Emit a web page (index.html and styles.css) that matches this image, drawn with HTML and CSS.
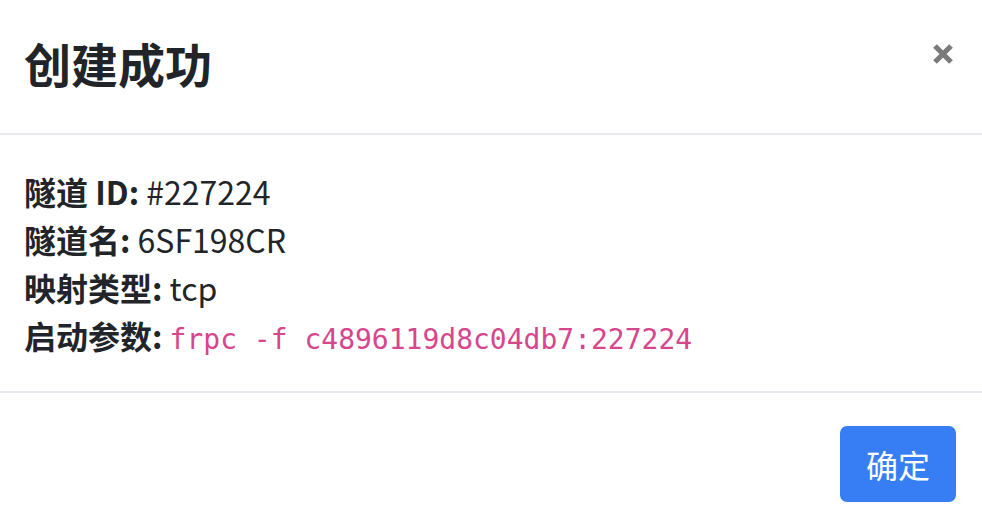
FILE: index.html
```html
<!DOCTYPE html>
<html lang="zh-CN">
<head>
<meta charset="utf-8">
<title>创建成功</title>
<link rel="stylesheet" href="styles.css">
</head>
<body>
<div class="modal">
  <div class="modal-header">
    <h4 class="modal-title">创建成功</h4>
    <button class="close" aria-label="Close">
      <svg width="22" height="22" viewBox="0 0 22 22"><path d="M3 3 L19 19 M19 3 L3 19" stroke="#7a7a7a" stroke-width="5.2" stroke-linecap="butt"/></svg>
    </button>
  </div>
  <div class="modal-body">
    <div class="row"><b>隧道 ID:</b> #227224</div>
    <div class="row"><b>隧道名:</b> 6SF198CR</div>
    <div class="row"><b>映射类型:</b> tcp</div>
    <div class="row"><b>启动参数:</b> <code>frpc -f c4896119d8c04db7:227224</code></div>
  </div>
  <div class="modal-footer">
    <button class="btn">确定</button>
  </div>
</div>
</body>
</html>
```
FILE: styles.css
```css
html, body {
  margin: 0;
  padding: 0;
  background: #fff;
}
body {
  font-family: "Noto Sans CJK SC", "Noto Sans", sans-serif;
  color: #212529;
  font-size: 32px;
  line-height: 48px;
}
.modal {
  width: 982px;
  height: 528px;
  overflow: hidden;
}
.modal-header {
  height: 135px;
  box-sizing: border-box;
  padding: 0 24px 8px 24px;
  display: flex;
  align-items: center;
  justify-content: space-between;
  border-bottom: 2px solid #e8e8ee;
}
.modal-title {
  margin: 0;
  font-size: 47px;
  font-weight: 700;
  line-height: 56px;
  color: #212529;
}
.close {
  align-self: flex-start;
  background: none;
  border: 0;
  padding: 0;
  margin: 43px 4px 0 0;
  width: 22px;
  height: 22px;
  display: flex;
}
.modal-body {
  padding: 32px 24px 32px 24px;
  border-bottom: 2px solid #e8e8ee;
}
.row {
  height: 48px;
  white-space: nowrap;
}
.row b {
  font-weight: 700;
}
code {
  font-family: "DejaVu Sans Mono", "Liberation Mono", monospace;
  font-size: 28px;
  line-height: 1;
  color: #d6468d;
}
.modal-footer {
  display: flex;
  justify-content: flex-end;
  padding: 33px 26px 0 24px;
}
.btn {
  font-family: "Noto Sans CJK SC", sans-serif;
  font-size: 32px;
  line-height: 48px;
  color: #fff;
  background: #377ef5;
  border: 2px solid #377ef5;
  border-radius: 7px;
  padding: 12px 24px;
  width: 116px;
  height: 76px;
  box-sizing: border-box;
}
```
